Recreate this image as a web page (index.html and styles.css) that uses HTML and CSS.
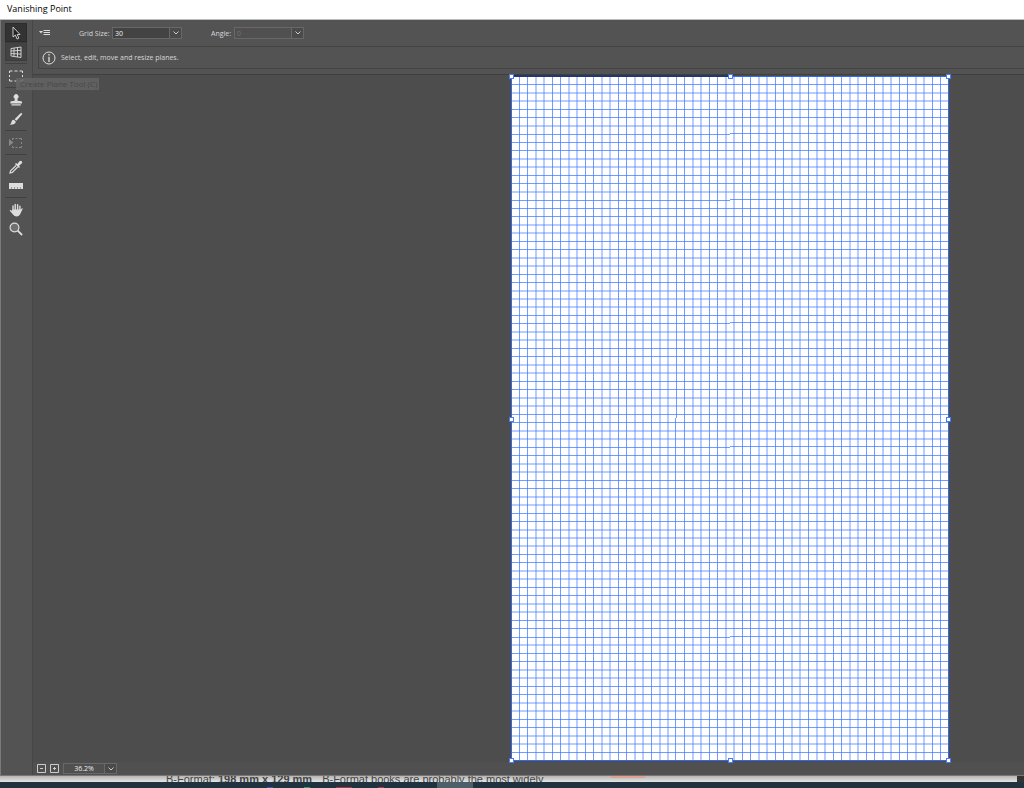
FILE: index.html
```html
<!DOCTYPE html>
<html lang="en">
<head>
    <meta charset="UTF-8">
    <title>Vanishing Point</title>
    <link rel="stylesheet" href="styles.css">
</head>
<body>
    <main class="dialog">
        <header class="titlebar">Vanishing Point</header>
        <div class="content">
            <nav class="tools" aria-label="Tools">
                <button class="tool active" aria-label="Edit Plane Tool">
                    <svg viewBox="0 0 14 14"><path d="M4 1v10l2.4-2 1.6 4 1.8-.8-1.6-3.7H11z" fill="#222" stroke="#ddd" stroke-width=".9"/></svg>
                </button>
                <button class="tool hovered" aria-label="Create Plane Tool">
                    <svg viewBox="0 0 14 14"><path d="M2 3.500l10-1.500v10.500L2 11zM5 3v8.500M8.500 2.500v9.500M2 6l10-.7M2 8.500l10 .6" fill="none" stroke="#ddd" stroke-width=".9"/></svg>
                </button>
                <hr>
                <button class="tool" aria-label="Marquee Tool">
                    <svg viewBox="0 0 14 14"><path d="M.5 4V2h3M5.500 2h3M10.500 2h3v2M13.500 6v2M13.500 10v2h-3M8.500 12h-3M3.500 12h-3v-2M.5 8V6" fill="none" stroke="#ddd"/></svg>
                </button>
                <hr>
                <button class="tool" aria-label="Stamp Tool">
                    <svg viewBox="0 0 14 14"><path d="M5.700 5.500a2.400 2.400 0 1 1 2.800 0v2.200l3.700.6q.8.2.8 1v1.200H1.400V9.300q0-.8.8-1l3.500-.6zM2.500 11.300h9.300v1.200H2.500z" fill="#ddd"/></svg>
                </button>
                <button class="tool" aria-label="Brush Tool">
                    <svg viewBox="0 0 14 14"><path d="M12.800 1.200q.8.4.2 1.400L7.500 8.800 5.600 7.200 11.300 1.600q.8-.8 1.500-.4zM4.900 7.800l1.900 1.600Q6.600 12.800.7 12.700 2.300 11.800 2.400 10 2.700 7.800 4.900 7.800z" fill="#ddd"/></svg>
                </button>
                <hr>
                <button class="tool" aria-label="Transform Tool" disabled>
                    <svg viewBox="0 0 14 14"><path d="M0 3l4.500 3.500L0 10z" fill="#888"/><path d="M3.500 4V2.500H5M6.500 2.500h2M10 2.500h2.500V4M12.500 6v2M12.500 10v1.500H10M8.500 11.500h-2M5 11.500H3.500V10" fill="none" stroke="#888"/></svg>
                </button>
                <hr>
                <button class="tool" aria-label="Eyedropper Tool">
                    <svg viewBox="0 0 14 14"><path d="M7 5.500L1.600 10.800 1 13l2.300-.6L8.700 7" fill="none" stroke="#ddd" stroke-width="1.200"/><path d="M6 4l1-1 1.400 1L10.500 1.200q1-1 2.200 0 1.200 1.200 0 2.400L10 5.800l1 1.300-1 1z" fill="#ddd"/></svg>
                </button>
                <button class="tool" aria-label="Measure Tool">
                    <svg viewBox="0 0 14 14"><path d="M0 4h14v6H0z" fill="#ddd"/><path d="M2.500 10V8M5.500 10V8M8.500 10V8M11.500 10V8" stroke="#999"/></svg>
                </button>
                <hr>
                <button class="tool" aria-label="Hand Tool">
                    <svg viewBox="0 0 14 14"><path d="M4 8V3M6.200 7V1.500M8.600 7V1.600M10.900 8V3.200" stroke="#ddd" stroke-width="1.400" stroke-linecap="round"/><path d="M3.300 6.500h8.300L13 5.300q1-.3.7.5L11 11.500Q9.800 13.500 7.700 13.500 5.300 13.500 4 11.500L.6 7.600q.1-1 1.300-.6l1.400 1.200z" fill="#ddd"/></svg>
                </button>
                <button class="tool" aria-label="Zoom Tool">
                    <svg viewBox="0 0 14 14"><circle cx="5.500" cy="5.500" r="4.400" fill="#707070" stroke="#ddd" stroke-width="1.200"/><path d="M8.700 8.700l4.400 4.300" stroke="#ddd" stroke-width="1.800"/></svg>
                </button>
                <span class="tooltip" role="tooltip">Create Plane Tool (C)</span>
            </nav>

            <section class="main">
                <form class="options">
                    <button type="button" class="menu" aria-label="Options menu">
                        <svg viewBox="0 0 12 8"><path d="M0 2h4L2 4.500z" fill="#ddd"/><path d="M4.500 1.500H11M4.500 3.500H11M4.500 5.500H11" stroke="#ddd"/></svg>
                    </button>
                    <label for="gridSize">Grid Size:</label>
                    <div class="combo">
                        <input type="text" id="gridSize" value="30">
                        <button type="button" aria-label="Grid size slider"><svg viewBox="0 0 8 6"><path d="M1.500 1.500L4 4l2.500-2.500" /></svg></button>
                    </div>
                    <label for="angle" class="angle">Angle:</label>
                    <div class="combo off">
                        <input type="text" id="angle" value="0" disabled>
                        <button type="button" aria-label="Angle slider"><svg viewBox="0 0 8 6"><path d="M1.500 1.500L4 4l2.500-2.500" /></svg></button>
                    </div>
                </form>
                <div class="info">
                    <svg viewBox="0 0 14 14"><circle cx="7" cy="7" r="6" fill="none" stroke="#ddd"/><path d="M7 3v1.600M7 5.800V11" stroke="#ddd" stroke-width="1.300"/></svg>
                    <span>Select, edit, move and resize planes.</span>
                </div>
                <div class="workspace">
                    <div class="plane">
                        <svg class="grid" id="grid" viewBox="0 0 438 685" preserveAspectRatio="none"></svg>
                        <i class="handle top left"></i>
                        <i class="handle top center"></i>
                        <i class="handle top right"></i>
                        <i class="handle middle left"></i>
                        <i class="handle middle right"></i>
                        <i class="handle bottom left"></i>
                        <i class="handle bottom center"></i>
                        <i class="handle bottom right"></i>
                    </div>
                </div>
                <footer class="status">
                    <button class="step" aria-label="Zoom out"><svg viewBox="0 0 9 9"><path d="M.5.5h8v8h-8zM3 4.500h3"/></svg></button>
                    <button class="step" aria-label="Zoom in"><svg viewBox="0 0 9 9"><path d="M.5.5h8v8h-8zM3 4.500h3M4.500 3v3"/></svg></button>
                    <div class="combo zoom">
                        <input type="text" value="36.2%" aria-label="Zoom level">
                        <button aria-label="Zoom presets"><svg viewBox="0 0 8 6"><path d="M1.500 1.500L4 4l2.500-2.500" /></svg></button>
                    </div>
                </footer>
            </section>
        </div>
    </main>

    <div class="page-behind">
        <p>B-Format: <b>198 mm x 129 mm</b></p>
        <p class="note">B-Format books are probably the most widely</p>
        <span class="banner"></span>
    </div>
    <div class="taskbar">
        <span class="blue"></span>
        <span class="green"></span>
        <span class="red"></span>
        <span class="red small"></span>
        <span class="current"></span>
    </div>

    <script>
        // Perspective grid: 53 columns by 83 rows
        const cols = 53;
        const rows = 83;
        const width = 438;
        const height = 685;
        const brokenRows = [7, 15, 30, 45, 68];
        const brokenCols = [20];
        let d = '';

        // Soft lines land between two pixels, sharp ones on a single pixel
        function snap(value) {
            return Math.round(value * 2 - 1) / 2 + 0.5;
        }

        for (let i = 1; i < cols; i++) {
            const x = snap(i * width / cols);
            if (brokenCols.includes(i)) {
                const left = Math.floor(x) - 0.5;
                d += `M${left + 1} 0V342M${left} 342V${height}`;
            } else {
                d += `M${x} 0V${height}`;
            }
        }
        for (let i = 1; i < rows; i++) {
            const y = snap(i * (height - 1) / rows) + 0.5;
            if (brokenRows.includes(i)) {
                const top = Math.floor(y) - 0.5;
                d += `M0 ${top + 1}H219M219 ${top}H${width}`;
            } else {
                d += `M0 ${y}H${width}`;
            }
        }
        document.getElementById('grid').innerHTML = `<path d="${d}"/>`;
    </script>
</body>
</html>
```

FILE: styles.css
```css
* {
    box-sizing: border-box;
}
body {
    margin: 0;
    height: 100vh;
    display: flex;
    flex-direction: column;
    overflow: hidden;
    font-family: "Open Sans", sans-serif;
    font-size: 7px;
    color: #d8d8d8;
    background: #1f3440;
}
button {
    padding: 0;
    border: none;
    background: none;
    display: flex;
    align-items: center;
    justify-content: center;
}
input {
    font: inherit;
    color: inherit;
}
.dialog {
    flex: 1;
    min-height: 0;
    display: flex;
    flex-direction: column;
    background: #535353;
    border-bottom: 1px solid #777;
}
.titlebar {
    height: 20px;
    padding-left: 7px;
    line-height: 17px;
    font-size: 9px;
    color: #000;
    background: #fff;
    border-bottom: 1px solid #b8c0bd;
}
.content {
    flex: 1;
    min-height: 0;
    display: flex;
    border-left: 1px solid #7a7a7a;
}

/* Tools */
.tools {
    position: relative;
    width: 32px;
    padding: 3px 5px 0 4px;
    display: flex;
    flex-direction: column;
    align-items: flex-start;
    border-right: 1px solid #464646;
}
.tool {
    width: 22px;
    height: 19px;
    flex-shrink: 0;
}
.tool svg {
    width: 14px;
    height: 14px;
}
.tool.active {
    background: #333;
    border: 1px solid #2c2c2c;
}
.tool.hovered {
    background: #434343;
    border: 1px solid #3c3c3c;
}
.tools hr {
    width: 22px;
    height: 1px;
    margin: 2px 0;
    border: none;
    background: #414141;
    flex-shrink: 0;
}
.tooltip {
    position: absolute;
    left: 15px;
    top: 58px;
    z-index: 1;
    width: 83px;
    height: 12px;
    padding-left: 4px;
    line-height: 11px;
    white-space: nowrap;
    color: #484848;
    background: rgba(100, 100, 100, 0.85);
    font-size: 8px;
}

/* Options */
.main {
    flex: 1;
    min-width: 0;
    display: flex;
    flex-direction: column;
}
.options {
    height: 26px;
    padding-left: 6px;
    display: flex;
    align-items: center;
}
.menu {
    width: 12px;
    margin-right: 28px;
}
.menu svg {
    width: 12px;
    height: 8px;
}
.options label {
    width: 33px;
}
.options .angle {
    width: 23px;
    margin-left: 29px;
}
.combo {
    width: 70px;
    height: 12px;
    display: flex;
    border: 1px solid #686868;
}
.combo input {
    flex: 1;
    min-width: 0;
    padding: 0 2px;
    border: none;
    background: #434343;
    color: #eee;
}
.combo button {
    width: 12px;
    border-left: 1px solid #686868;
    background: #4a4a4a;
}
.combo svg {
    width: 8px;
    height: 6px;
    fill: none;
    stroke: #ccc;
}
.combo.off input {
    background: #505050;
    color: #707070;
}
.info {
    height: 23px;
    margin-left: 5px;
    padding-left: 3px;
    display: flex;
    align-items: center;
    gap: 5px;
    border: 1px solid #434343;
    border-right: none;
}
.info svg {
    width: 14px;
    height: 14px;
}

/* Canvas */
.workspace {
    position: relative;
    flex: 1;
    min-height: 0;
    margin-top: 5px;
    background: #4d4d4d;
    border-top: 1px solid #3f3f3f;
}
.plane {
    position: absolute;
    left: 478px;
    top: 1px;
    width: 438px;
    height: 685px;
    background: #fff;
    outline: 1px solid #3468ec;
    outline-offset: -1px;
}
.plane::before {
    content: "";
    position: absolute;
    left: 0;
    top: -1px;
    width: 50%;
    height: 2px;
    background: #24366e;
}
.grid {
    display: block;
    width: 100%;
    height: 100%;
    fill: none;
    stroke: #3c74ff;
    stroke-opacity: 0.72;
}
.handle {
    position: absolute;
    width: 5px;
    height: 5px;
    margin: -2px;
    background: #fff;
    border: 1px solid #4a7cf5;
}
.top { top: 0; }
.middle { top: 50%; }
.bottom { bottom: 0; }
.left { left: 0; }
.center { left: 50%; }
.right { right: 0; }

/* Status */
.status {
    height: 13px;
    padding-left: 4px;
    display: flex;
    align-items: center;
    gap: 4px;
    background: #505050;
}
.step {
    width: 9px;
    height: 9px;
}
.step svg {
    width: 9px;
    height: 9px;
    fill: none;
    stroke: #ccc;
}
.zoom {
    width: 54px;
    height: 11px;
}
.zoom input {
    background: #505050;
    text-align: center;
}

/* Behind the dialog */
.page-behind {
    height: 6px;
    padding-left: 166px;
    display: flex;
    overflow: hidden;
    font: 11px/10px "Liberation Sans", sans-serif;
    color: #444;
    background: linear-gradient(#b5b5b5, #e4e4e4);
    border-right: 7px solid #333;
}
.page-behind p {
    margin: -2px 0 0;
    white-space: nowrap;
}
.page-behind .note {
    margin-left: 10px;
}
.banner {
    width: 34px;
    height: 2px;
    margin-left: 68px;
    background: #dfa292;
}
.taskbar {
    height: 6px;
    display: flex;
    align-items: flex-end;
    background: #1f3440;
}
.taskbar span {
    width: 6px;
    height: 1px;
}
.taskbar .blue {
    margin-left: 267px;
    background: #4054c0;
}
.taskbar .green {
    margin-left: 31px;
    background: #2d9a70;
}
.taskbar .red {
    width: 16px;
    margin-left: 26px;
    background: #a83848;
}
.taskbar .small {
    width: 6px;
}
.taskbar .current {
    width: 36px;
    height: 6px;
    margin-left: 53px;
    background: #4c606a;
}
```
